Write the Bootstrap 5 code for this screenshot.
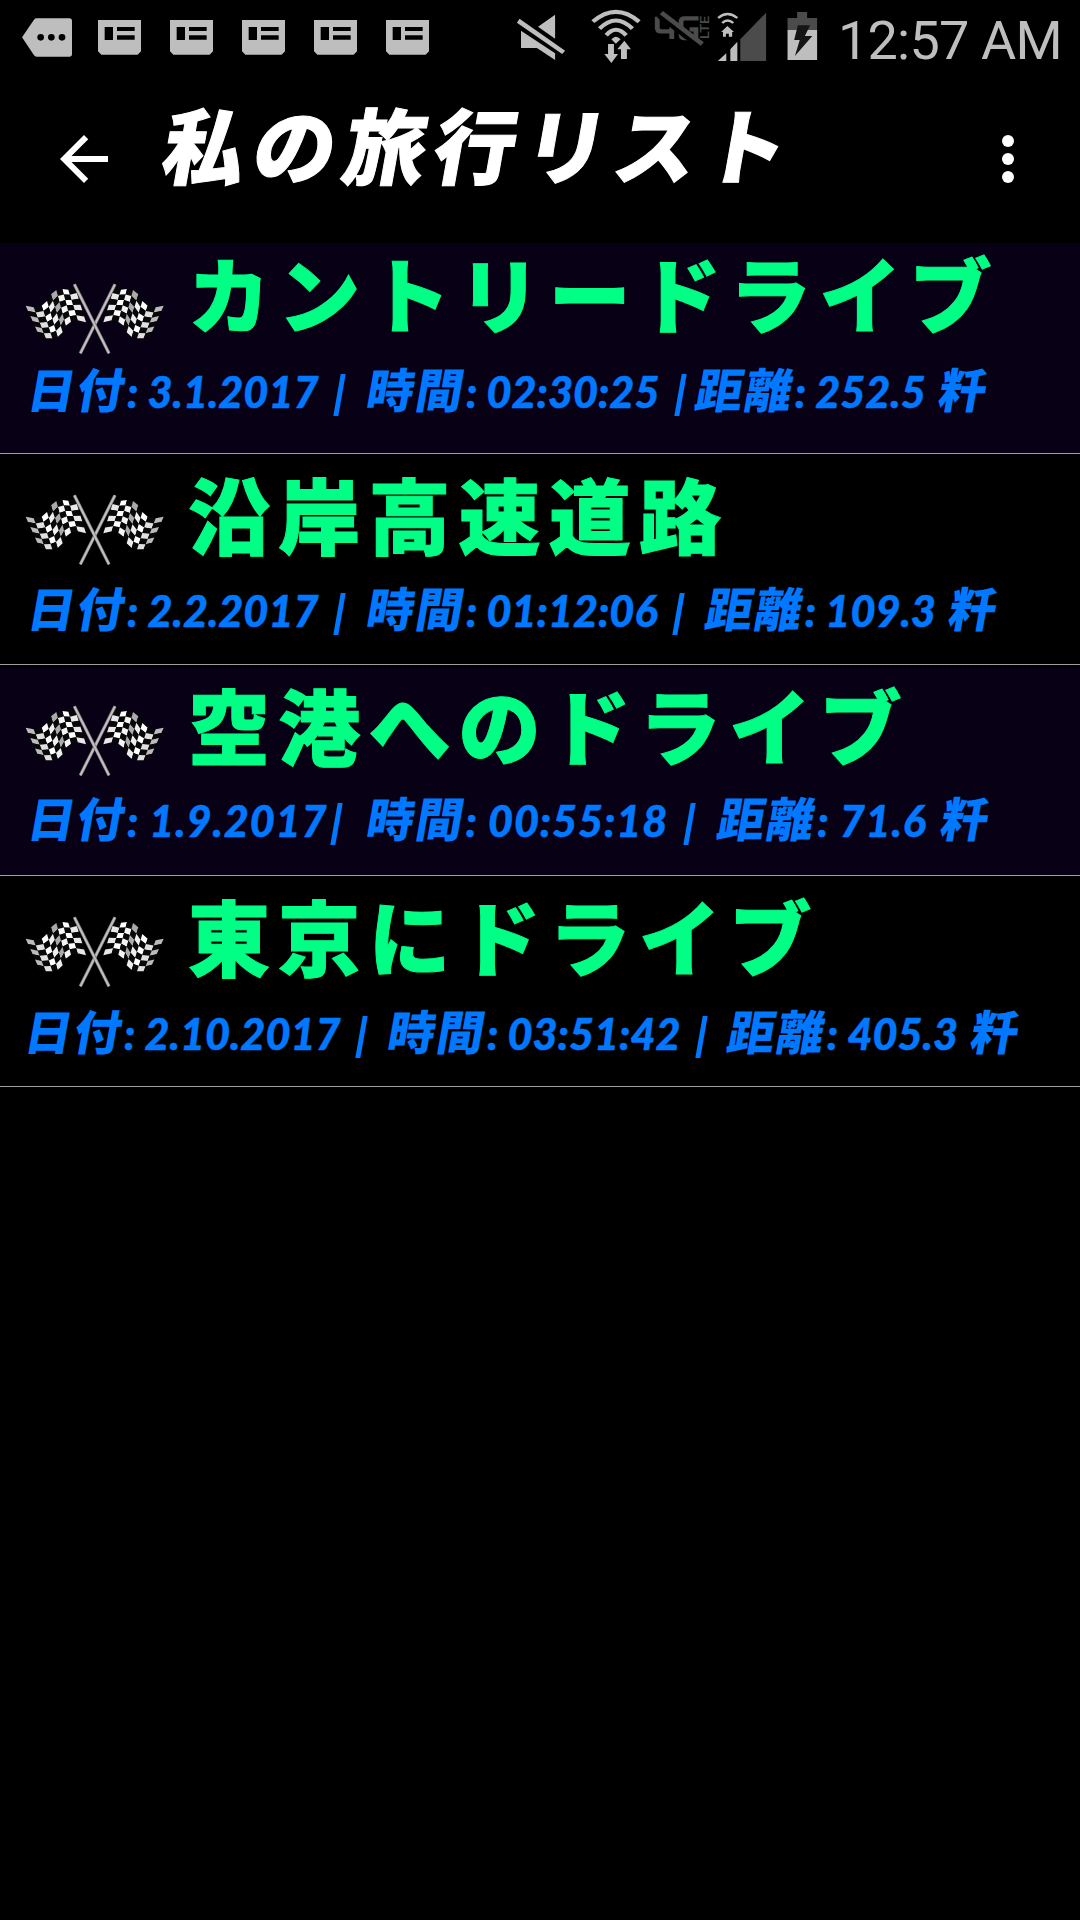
<!DOCTYPE html>
<html lang="ja">
  <head>
    <meta charset="UTF-8" />
    <meta name="viewport" content="width=device-width, initial-scale=1" />
    <title>私の旅行リスト</title>
    <link
      href="https://cdn.jsdelivr.net/npm/bootstrap@5.3.0/dist/css/bootstrap.min.css"
      rel="stylesheet"
    />
    <style>
      body {
        background: #000;
        font-family: "Noto Sans CJK JP", sans-serif;
        overflow: hidden;
      }
      svg {
        display: block;
        flex: none;
      }
      .status-bar {
        height: 80px;
        color: #bebebe;
        fill: #bebebe;
      }
      .notifications {
        gap: 29px;
      }
      .status-right {
        margin-left: 82px;
      }
      .clock {
        font: 400 54px/82px Roboto, sans-serif;
        margin-left: 5px;
        letter-spacing: -0.8px;
      }
      .app-bar {
        height: 163px;
        padding: 43px 36px 0 48px;
      }
      .app-title {
        font-size: 82px;
        line-height: 100px;
        font-weight: 900;
        letter-spacing: 8.2px;
        margin: -30px 0 0 45px;
        transform: skewX(-10deg);
        -webkit-text-stroke: 1px;
      }
      .trip {
        height: 211px;
        background: #000;
        border-bottom: 1px solid #a0a0a0;
      }
      .trip-tinted {
        background: #080014;
      }
      .trip-gap {
        border-top: 3px solid #000;
      }
      .flag-icon {
        margin: 32px 0 0 15px;
      }
      .trip-gap .flag-icon {
        margin-top: 29px;
      }
      .trip-head {
        height: 118px;
      }
      .trip-name {
        color: #00ff84;
        font-size: 82px;
        line-height: 100px;
        font-weight: 900;
        letter-spacing: 8.2px;
        margin: -1px 0 0 13px;
        -webkit-text-stroke: 1px;
      }
      .trip-info {
        color: #0078ff;
        font: italic 900 43.2px/60px Lato, sans-serif;
        padding-left: 29px;
        -webkit-text-stroke: 0.5px;
      }
      .trip-info b {
        display: inline-block;
        font: 900 47px/50px "Noto Sans CJK JP", sans-serif;
        letter-spacing: 2px;
        transform: skewX(-10deg);
        -webkit-text-stroke: 0;
      }
      .trip-info .unit {
        margin-left: 5px;
      }
      /* slanted divider between the values */
      .trip-info i {
        display: inline-block;
        width: 5px;
        height: 42px;
        background: currentColor;
        vertical-align: -8px;
        margin: 0 17px 0 9px;
        transform: skewX(-10deg);
      }
      .trip-info .bar-tight {
        margin-right: 14px;
      }
      .trip-info .bar-joined {
        margin-left: 6px;
        margin-right: 19px;
      }

      /* rows with a lowered text block */
      .trip-low .trip-head {
        height: 126px;
      }
      .trip-low .trip-name {
        margin-top: 9px;
      }
      .trip-gap .trip-head {
        height: 122px;
      }
      .trip-gap .trip-name {
        margin-top: 6px;
      }
      .trip-gap .trip-info {
        letter-spacing: 0.9px;
      }
      .trip-last .trip-head {
        height: 127px;
      }
      .trip-last .trip-info {
        padding-left: 26px;
      }
      .trip-last .trip-info i {
        margin-right: 16px;
      }
    </style>
  </head>
  <body>
    <!-- shared shapes -->
    <svg width="0" height="0" class="d-none">
      <symbol id="card-icon" viewBox="294 0 129 240">
        <path
          fill-rule="evenodd"
          d="M294 60H423V154L413 164H304L294 154ZM314 81V120H339V81ZM351 81V93H404V81ZM351 106V119H404V106Z"
        />
      </symbol>
    </svg>

    <div class="status-bar d-flex align-items-start">
      <svg width="98" height="80" viewBox="0 0 294 240">
        <path d="M66 112L102 59Q105 55 110 55H208Q216 55 216 63V162Q216 170 208 170H110Q105 170 102 166Z" />
        <g fill="#000">
          <circle cx="122" cy="112" r="10" />
          <circle cx="154" cy="112" r="10" />
          <circle cx="186" cy="112" r="10" />
        </g>
      </svg>
      <div class="notifications d-flex">
        <svg width="43" height="80"><use href="#card-icon" /></svg>
        <svg width="43" height="80"><use href="#card-icon" /></svg>
        <svg width="43" height="80"><use href="#card-icon" /></svg>
        <svg width="43" height="80"><use href="#card-icon" /></svg>
        <svg width="43" height="80"><use href="#card-icon" /></svg>
      </div>

      <div class="status-right d-flex">
        <!-- muted -->
        <svg width="63" height="80" viewBox="30 0 170 240" preserveAspectRatio="none">
          <path d="M103 80L149 44V116ZM57 92L149 160V180L100 144H57ZM53 56L176 152L168 162L46 68Z" />
        </svg>
        <!-- wifi -->
        <svg width="74" height="80" viewBox="200 0 200 240" preserveAspectRatio="none">
          <g fill="none" stroke="#bebebe" stroke-width="12">
            <path d="M251 65Q313 6 376 65" />
            <path d="M269 86Q313 37 358 86" />
            <path d="M287 106Q313 73 341 106" />
          </g>
          <path d="M301 118Q313 103 326 118L313 131Z" />
          <path d="M292 132H308V162H319L301 189L282 162H292ZM336 122L354 148H343V177H327V148H317Z" />
        </svg>
        <!-- 4G LTE off -->
        <svg width="65" height="80" viewBox="400 0 175 240" preserveAspectRatio="none">
          <g fill="none" stroke="#4b4b4b" stroke-width="13">
            <path d="M425 50V84Q425 94 435 94H470M464 57V117" />
            <path d="M536 55H499Q489 55 489 65V104Q489 114 499 114H529V88H512" />
            <path d="M432 44L542 138" stroke="#000" stroke-width="22" />
            <path d="M436 38L546 132" />
          </g>
          <text
            transform="translate(565 117) rotate(-90)"
            font-family="Roboto, sans-serif"
            font-weight="500"
            font-size="34"
            textLength="70"
            lengthAdjust="spacingAndGlyphs"
            fill="#4b4b4b"
          >LTE</text>
        </svg>
        <!-- signal -->
        <svg width="59" height="80" viewBox="575 0 160 240" preserveAspectRatio="none">
          <g fill="none" stroke="#bebebe" stroke-width="7">
            <path d="M589 54Q614 30 641 54" />
            <path d="M600 69Q614 54 630 69" />
          </g>
          <path d="M614 78L632 96H627V110H618V101H610V110H602V96H597Z" />
          <path d="M588 183L611 160V183ZM622 148L641 125V183H622Z" />
          <path d="M649 118L719 38V183H649Z" fill="#4b4b4b" />
        </svg>
        <!-- charging battery -->
        <svg width="61" height="80" viewBox="735 0 165 240" preserveAspectRatio="none">
          <path d="M803 36H830V54H857V90H777V54H803Z" fill="#4b4b4b" />
          <path d="M777 90H857V180H777Z" />
          <path d="M805 76H838L824 108H844L797 168L810 120H795Z" fill="#141414" />
        </svg>
        <div class="clock text-nowrap">12:57 AM</div>
      </div>
    </div>

    <nav class="app-bar d-flex align-items-start text-white">
      <svg width="72" height="72" viewBox="0 0 24 24" fill="#fff">
        <path d="M20 11H7.83l5.59-5.59L12 4l-8 8 8 8 1.41-1.41L7.83 13H20z" />
      </svg>
      <h1 class="app-title text-nowrap">私の旅行リスト</h1>
      <svg class="ms-auto" width="72" height="72" viewBox="0 0 24 24" fill="#fff">
        <circle cx="12" cy="6" r="2" />
        <circle cx="12" cy="12" r="2" />
        <circle cx="12" cy="18" r="2" />
      </svg>
    </nav>

    <main>
      <section class="trip trip-tinted">
        <div class="trip-head d-flex align-items-start">
          <svg class="flag-icon" width="160" height="90" viewBox="0 0 480 270"></svg>
          <h2 class="trip-name text-nowrap">カントリードライブ</h2>
        </div>
        <div class="trip-info text-nowrap"><b>日付</b>: 3.1.2017 <i></i> <b>時間</b>: 02:30:25 <i class="bar-tight"></i><b>距離</b>: 252.5 <b class="unit">粁</b></div>
      </section>
      <section class="trip trip-low">
        <div class="trip-head d-flex align-items-start">
          <svg class="flag-icon" width="160" height="90" viewBox="0 0 480 270"></svg>
          <h2 class="trip-name text-nowrap">沿岸高速道路</h2>
        </div>
        <div class="trip-info text-nowrap"><b>日付</b>: 2.2.2017 <i></i> <b>時間</b>: 01:12:06 <i></i> <b>距離</b>: 109.3 <b class="unit">粁</b></div>
      </section>
      <section class="trip trip-tinted trip-gap">
        <div class="trip-head d-flex align-items-start">
          <svg class="flag-icon" width="160" height="90" viewBox="0 0 480 270"></svg>
          <h2 class="trip-name text-nowrap">空港へのドライブ</h2>
        </div>
        <div class="trip-info text-nowrap"><b>日付</b>: 1.9.2017<i class="bar-joined"></i> <b>時間</b>: 00:55:18 <i></i> <b>距離</b>: 71.6 <b class="unit">粁</b></div>
      </section>
      <section class="trip trip-low trip-last">
        <div class="trip-head d-flex align-items-start">
          <svg class="flag-icon" width="160" height="90" viewBox="0 0 480 270"></svg>
          <h2 class="trip-name text-nowrap">東京にドライブ</h2>
        </div>
        <div class="trip-info text-nowrap"><b>日付</b>: 2.10.2017 <i></i> <b>時間</b>: 03:51:42 <i></i> <b>距離</b>: 405.3 <b class="unit">粁</b></div>
      </section>
    </main>

    <script src="https://cdn.jsdelivr.net/npm/bootstrap@5.3.0/dist/js/bootstrap.bundle.min.js"></script>
    <script>
      // Waving flag: top and bottom edges, from the pole to the tail
      const topEdge = [[180, 36], [160, 44], [142, 42], [124, 45], [108, 58], [96, 78], [80, 92], [56, 97], [32, 92]];
      const bottomEdge = [[213, 142], [188, 136], [168, 140], [152, 152], [143, 172], [128, 186], [112, 190], [92, 190], [74, 186]];
      const shades = ["#e8e8e8", "#fff", "#f4f4f4", "#aaa", "#eee", "#fff", "#e0e0e0", "#bbb"];
      const rows = 6;

      function meshPoint(col, row) {
        const t = row / rows;
        const [x1, y1] = topEdge[col];
        const [x2, y2] = bottomEdge[col];
        return `${x1 + (x2 - x1) * t},${y1 + (y2 - y1) * t}`;
      }

      let cloth = "";
      for (let c = 0; c < 8; c++) {
        for (let r = 0; r < rows; r++) {
          const fill = (c + r) % 2 ? shades[c] : "#080808";
          const points = [meshPoint(c, r), meshPoint(c + 1, r), meshPoint(c + 1, r + 1), meshPoint(c, r + 1)];
          cloth += `<polygon points="${points.join(" ")}" fill="${fill}"/>`;
        }
      }
      const flag =
        cloth +
        '<path d="M178 28L282 235" stroke="#777" stroke-width="10"/>' +
        '<path d="M178 28L282 235" stroke="#c4c0c0" stroke-width="6"/>';

      document.querySelectorAll(".flag-icon").forEach((icon) => {
        icon.innerHTML = `<g transform="translate(478 0) scale(-1 1)">${flag}</g><g>${flag}</g>`;
      });
    </script>
  </body>
</html>
